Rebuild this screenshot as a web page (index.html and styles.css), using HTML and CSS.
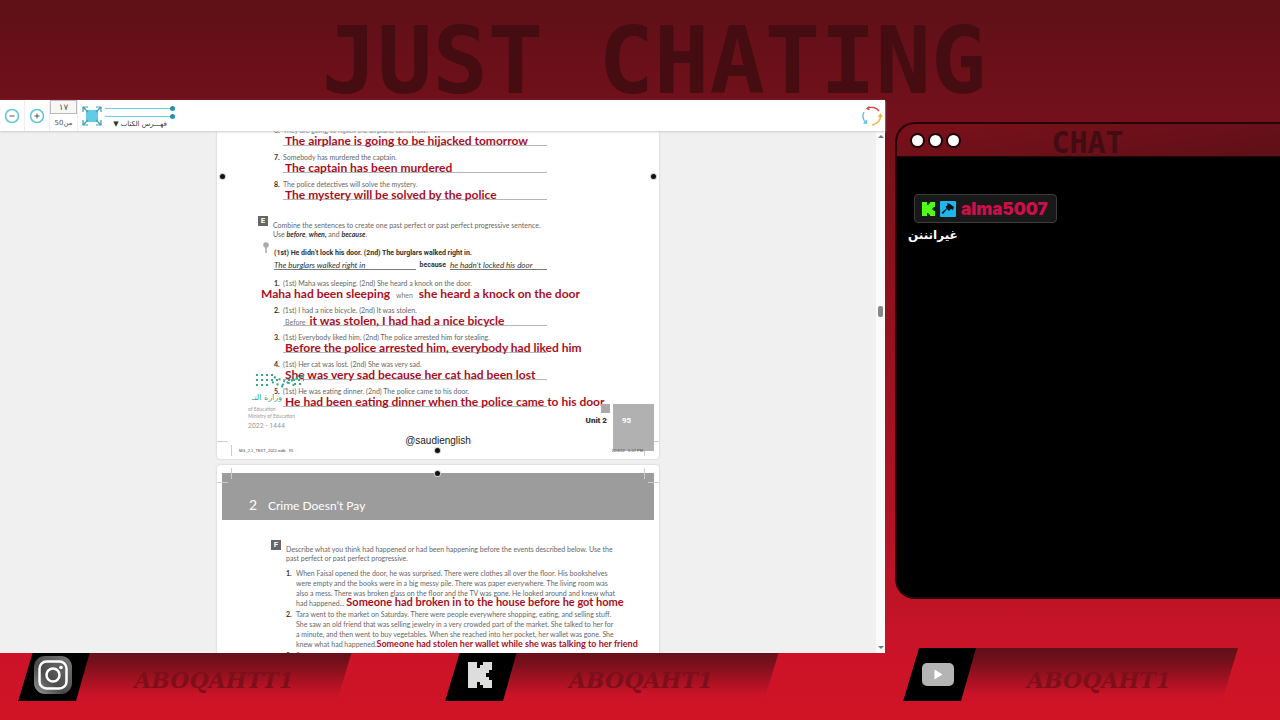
FILE: index.html
```html
<!DOCTYPE html>
<html lang="en">
<head>
    <meta charset="UTF-8">
    <meta name="viewport" content="width=device-width, initial-scale=1.0">
    <title>Just Chating</title>
    <link rel="stylesheet" href="styles.css">
</head>
<body>

    <header class="banner">
        <h1>JUST CHATING</h1>
    </header>

    <main class="stage">
        <section class="viewer">
            <div class="toolbar">
                <button class="tool" aria-label="Zoom out">
                    <svg width="16" height="16" viewBox="0 0 16 16" fill="none"><circle cx="8" cy="8" r="6.5" stroke="#67c5dc" stroke-width="1.6"/><path d="M5.5 8h5" stroke="#555"/></svg>
                </button>
                <button class="tool" aria-label="Zoom in">
                    <svg width="16" height="16" viewBox="0 0 16 16" fill="none"><circle cx="8" cy="8" r="6.5" stroke="#67c5dc" stroke-width="1.6"/><path d="M5.5 8h5M8 5.5v5" stroke="#555"/></svg>
                </button>
                <div class="pager">
                    <input type="text" value="١٧" aria-label="Page number">
                    <span dir="rtl">من50</span>
                </div>
                <button class="tool full" aria-label="Full screen">
                    <svg width="20" height="20" viewBox="0 0 20 20" fill="none"><rect x="4" y="4" width="12" height="12" fill="#63cbe8"/><path d="M1 6V1h5M14 1h5v5M19 14v5h-5M6 19H1v-5M1 1l5 5M19 1l-5 5M19 19l-5-5M1 19l5-5" stroke="#3f9db5" stroke-width="1.2"/></svg>
                </button>
                <div class="contents">
                    <input type="range" value="100" aria-label="Zoom level">
                    <input type="range" value="100" aria-label="Brightness">
                    <button dir="rtl">فهـــرس الكتاب ▼</button>
                </div>
                <button class="tool refresh" aria-label="Refresh">
                    <svg width="22" height="22" viewBox="0 0 22 22" fill="none" stroke-width="1.4"><path d="M18 6C15 2 10 1.500 6 3.500M8.500 1.500L6 3.500l2.500 1.500" stroke="#cf4a3c"/><path d="M19.500 10c.5 5-3 9-8.500 10M17.500 12l2-2.500 1.500 2.500" stroke="#e8b93c"/><path d="M3 7c-2 4-1 8 2.500 11M5.500 15v3H2.500" stroke="#62c4e0"/></svg>
                </button>
            </div>

            <div class="reader">
                <div class="pages">
                    <article class="page page-95">
                        <i class="mark mark-left"></i>
                        <i class="mark mark-right"></i>
                        <i class="mark mark-bottom"></i>

                        <ol class="exercise" start="6">
                            <li><b class="num">6.</b><p>They are going to hijack the airplane tomorrow.</p><p class="answer">The airplane is going to be hijacked tomorrow</p></li>
                            <li><b class="num">7.</b><p>Somebody has murdered the captain.</p><p class="answer">The captain has been murdered</p></li>
                            <li><b class="num">8.</b><p>The police detectives will solve the mystery.</p><p class="answer">The mystery will be solved by the police</p></li>
                        </ol>

                        <div class="task">
                            <b class="letter">E</b>
                            <p>Combine the sentences to create one past perfect or past perfect progressive sentence.<br>Use <b><i>before</i></b>, <b><i>when,</i></b> and <b><i>because</i></b>.</p>
                        </div>

                        <div class="sample">
                            <svg class="key" width="8" height="12" viewBox="0 0 8 12"><circle cx="4" cy="3" r="2.800" fill="#aaa"/><path d="M4 5v6" stroke="#aaa" stroke-width="1.500"/></svg>
                            <b>(1st) He didn’t lock his door. (2nd) The burglars walked right in.</b>
                            <div class="written">
                                <i class="first">The burglars walked right in</i>
                                <b>because</b>
                                <i class="second">he hadn’t locked his door</i>
                            </div>
                        </div>

                        <ol class="exercise">
                            <li><b class="num">1.</b><p>(1st) Maha was sleeping. (2nd) She heard a knock on the door.</p><p class="answer wide">Maha had been sleeping <small>when</small> she heard a knock on the door</p></li>
                            <li><b class="num">2.</b><p>(1st) I had a nice bicycle. (2nd) It was stolen.</p><p class="answer"><small>Before</small>it was stolen, I had had a nice bicycle</p></li>
                            <li><b class="num">3.</b><p>(1st) Everybody liked him. (2nd) The police arrested him for stealing.</p><p class="answer">Before the police arrested him, everybody had liked him</p></li>
                            <li><b class="num">4.</b><p>(1st) Her cat was lost. (2nd) She was very sad.</p><p class="answer">She was very sad because her cat had been lost</p></li>
                            <li><b class="num">5.</b><p>(1st) He was eating dinner. (2nd) The police came to his door.</p><p class="answer">He had been eating dinner when the police came to his door</p></li>
                        </ol>

                        <div class="ministry">
                            <svg width="52" height="18" viewBox="0 0 52 18"><path d="M2 3h20M2 8h24M2 13h12M20 5l22 9M18 10l14 6M28 13l20-9M34 8h16M38 4h12M40 12h10" stroke="#35a987" stroke-width="2" stroke-dasharray="2 3" fill="none"/></svg>
                            <strong dir="rtl">وزارة التـ</strong>
                            <span>of Education</span>
                            <span>Ministry of Education</span>
                            <em>2022 - 1444</em>
                        </div>

                        <div class="folio"><b>Unit 2</b><span>95</span></div>
                        <p class="handle">@saudienglish</p>
                        <div class="slug"><span>MG_2.1_TEXT_2022.indb &nbsp; 95</span><span>12/4/22 &nbsp; 5:57 PM</span></div>
                    </article>

                    <article class="page page-96">
                        <i class="mark mark-top"></i>
                        <h2><span>2</span>Crime Doesn’t Pay</h2>
                        <div class="task">
                            <b class="letter">F</b>
                            <p>Describe what you think had happened or had been happening before the events described below. Use the<br>past perfect or past perfect progressive.</p>
                        </div>
                        <ol class="stories">
                            <li><b class="num">1.</b><p>When Faisal opened the door, he was surprised. There were clothes all over the floor. His bookshelves<br>were empty and the books were in a big messy pile. There was paper everywhere. The living room was<br>also a mess. There was broken glass on the floor and the TV was gone. He looked around and knew what<br>had happened... <strong>Someone had broken in to the house before he got home</strong></p></li>
                            <li><b class="num">2.</b><p>Tara went to the market on Saturday. There were people everywhere shopping, eating, and selling stuff.<br>She saw an old friend that was selling jewelry in a very crowded part of the market. She talked to her for<br>a minute, and then went to buy vegetables. When she reached into her pocket, her wallet was gone. She<br>knew what had happened.<strong class="small">Someone had stolen her wallet while she was talking to her friend</strong></p></li>
                            <li><b class="num">3.</b><p>Someone</p></li>
                        </ol>
                    </article>
                </div>

                <div class="scrollbar">
                    <i class="arrow up"></i>
                    <i class="thumb"></i>
                    <i class="arrow down"></i>
                </div>
            </div>
        </section>

        <aside class="chat">
            <div class="chat-head">
                <i class="dot"></i><i class="dot"></i><i class="dot"></i>
                <h2>CHAT</h2>
            </div>
            <div class="chat-body">
                <div class="user">
                    <svg width="13" height="14" viewBox="0 0 13 14"><path d="M0 0h5v3h1.500V1.500H8V0h5v5h-1.500v1.500H10v1h1.500V9H13v5H8v-1.500H6.500V11H5v3H0z" fill="#53fc18"/></svg>
                    <svg width="16" height="16" viewBox="0 0 16 16"><rect width="16" height="16" rx="1" fill="#1fb6ee"/><path d="M7 2l3 1 4 3-1 3-2-1-2 2-2-2-4 5-1.500-1.500 5-4-1-2 2-1z" fill="#06151c"/></svg>
                    <b>alma5007</b>
                </div>
                <p dir="rtl">غيرانننن</p>
            </div>
        </aside>
    </main>

    <footer class="socials">
        <a class="social" href="#">
            <span class="logo">
                <svg width="38" height="38" viewBox="0 0 38 38" fill="none"><defs><linearGradient id="ig" x1="0" y1="1" x2="1" y2="0"><stop offset="0" stop-color="#999"/><stop offset=".4" stop-color="#4a4a4a"/><stop offset="1" stop-color="#777"/></linearGradient></defs><rect width="38" height="38" rx="11" fill="url(#ig)"/><rect x="5.500" y="5.500" width="27" height="27" rx="7" stroke="#fff" stroke-width="2.500"/><circle cx="19" cy="19" r="6.500" stroke="#fff" stroke-width="2.500"/><circle cx="27" cy="11.500" r="1.800" fill="#fff"/></svg>
            </span>
            <b>ABOQAHTT1</b>
        </a>
        <a class="social" href="#">
            <span class="logo">
                <svg width="24" height="26" viewBox="0 0 24 26"><path d="M0 0h9v6h3V3h3V0h9v8h-3v3h-3v4h3v3h3v8h-9v-3h-3v-3H9v6H0z" fill="#ddd"/></svg>
            </span>
            <b>ABOQAHT1</b>
        </a>
        <a class="social" href="#">
            <span class="logo">
                <svg width="32" height="23" viewBox="0 0 32 23"><rect width="32" height="23" rx="5" fill="#b4b4b4"/><path d="M12.500 6.500v10l8-5z" fill="#fff"/></svg>
            </span>
            <b>ABOQAHT1</b>
        </a>
    </footer>

</body>
</html>
```
FILE: styles.css
```css
* {
    box-sizing: border-box;
}
body {
    margin: 0;
    min-height: 100vh;
    display: flex;
    flex-direction: column;
    overflow: hidden;
    font-family: Lato, sans-serif;
    background: linear-gradient(#5f1018 0%, #74101b 17%, #be1426 83%, #cb1328 90%, #d01426 100%);
}
h1, h2, p, ol {
    margin: 0;
    padding: 0;
}
ol {
    list-style: none;
}
button {
    border: none;
    background: none;
    padding: 0;
    cursor: pointer;
}
.banner {
    height: 100px;
    padding-left: 28px;
    text-align: center;
}
.banner h1 {
    font: bold 92px/124px "DejaVu Sans Mono", monospace;
    color: #450c12;
    white-space: nowrap;
}
.stage {
    display: flex;
    flex: 1;
    min-height: 0;
}

/* book viewer */
.viewer {
    flex: 885;
    min-width: 0;
    display: flex;
    flex-direction: column;
    background: #fff;
    position: relative;
    z-index: 1;
}
.toolbar {
    height: 31px;
    display: flex;
    align-items: stretch;
    box-shadow: 0 1px 2px #ccc;
    position: relative;
    z-index: 1;
}
.tool {
    width: 25px;
    display: flex;
    align-items: center;
    justify-content: center;
    border-right: 1px solid #eee;
}
.pager {
    width: 28px;
    text-align: center;
    border-right: 1px solid #eee;
    font: 7px/18px "DejaVu Sans", sans-serif;
    color: #555;
}
.pager input {
    display: block;
    width: 100%;
    height: 14px;
    padding: 0;
    border: 1px solid #bbb;
    background: #f6f6f6;
    text-align: center;
    font: 9px "DejaVu Sans", sans-serif;
    color: #555;
}
.pager span {
    display: block;
}
.full, .refresh {
    width: 27px;
    border: none;
}
.contents {
    width: 70px;
    padding-top: 4px;
    display: flex;
    flex-direction: column;
}
.contents input {
    appearance: none;
    width: 100%;
    height: 8px;
    margin: 0;
    background: linear-gradient(#6fcbe2, #6fcbe2) center / 100% 1px no-repeat;
}
.contents input::-webkit-slider-thumb {
    appearance: none;
    width: 5px;
    height: 5px;
    border-radius: 50%;
    background: #2b8fae;
}
.contents button {
    font: 7px/9px "DejaVu Sans", sans-serif;
    color: #333;
    white-space: nowrap;
}
.refresh {
    margin-left: auto;
}
.reader {
    flex: 1;
    min-height: 0;
    display: flex;
    background: #f0f0f0;
}
.pages {
    flex: 1;
    height: 522px;
    overflow: hidden;
    display: flex;
    flex-direction: column;
    align-items: center;
    gap: 6px;
}
.page {
    flex: none;
    width: 100%;
    max-width: 442px;
    background: #fff;
    border-radius: 3px;
    box-shadow: 0 0 2px #bbb;
    position: relative;
    font-size: 7px;
    line-height: 11px;
    color: #666;
}
.page-95 {
    height: 334px;
    margin-top: -6px;
}
.page-96 {
    padding: 8px 5px;
    line-height: 10px;
}
/* crop marks in the page corners */
.page::before {
    content: "";
    position: absolute;
    left: 0;
    right: 0;
    bottom: 3px;
    height: 15px;
    background:
        linear-gradient(#ccc, #ccc) 0 0 / 11px 1px no-repeat,
        linear-gradient(#ccc, #ccc) 100% 0 / 11px 1px no-repeat,
        linear-gradient(#ccc, #ccc) 14px 100% / 1px 11px no-repeat,
        linear-gradient(#ccc, #ccc) calc(100% - 14px) 100% / 1px 11px no-repeat;
}
.page-96::before {
    top: 3px;
    transform: scaleY(-1);
}
.num, .exercise b {
    color: #333;
}
.exercise {
    padding-left: 57px;
}
.exercise li {
    display: grid;
    grid-template-columns: 9px 264px;
    height: 27px;
    align-content: start;
    white-space: nowrap;
}
.answer {
    grid-column: 2;
    height: 10px;
    padding-left: 2px;
    border-bottom: 1px solid #b5b5b5;
    font: bold 12px/9px Lato, sans-serif;
    color: #a90f24;
}
.answer small {
    padding-right: 4px;
    font: 7px/7px Lato, sans-serif;
    color: #777;
}
.answer.wide {
    grid-column: 1 / 3;
    margin-left: -15px;
    border: none;
}
.answer.wide small {
    padding: 0 3px;
}
.task {
    display: flex;
    gap: 5px;
    line-height: 9px;
    white-space: nowrap;
}
.page-95 .task {
    margin: 10px 0 9px 41px;
}
.task i {
    color: #333;
}
.letter {
    flex: none;
    width: 10px;
    height: 10px;
    background: #666;
    color: #fff;
    text-align: center;
    font: bold 8px/10px Roboto, sans-serif;
}
.task p {
    padding-top: 5px;
}
.sample {
    position: relative;
    margin-left: 57px;
    height: 30px;
    color: #333;
    white-space: nowrap;
    font-family: Roboto, sans-serif;
}
.key {
    position: absolute;
    left: -12px;
    top: -6px;
}
.written {
    display: flex;
    gap: 4px;
    width: 273px;
    line-height: 12px;
}
.written i {
    font: italic 8px/12px Lato, sans-serif;
    height: 11px;
    border-bottom: 1px solid #777;
}
.first {
    flex: 143;
}
.second {
    flex: 98;
}
.ministry {
    position: absolute;
    left: 31px;
    top: 247px;
    width: 56px;
    display: flex;
    flex-direction: column;
    font-size: 5px;
    line-height: 7px;
    color: #999;
    white-space: nowrap;
}
.ministry svg {
    margin-left: 6px;
}
.ministry strong {
    width: 34px;
    font: 8px/16px "DejaVu Sans", sans-serif;
    color: #35a987;
}
.ministry em {
    font: 7px/12px Roboto, sans-serif;
}
.folio {
    display: flex;
    justify-content: flex-end;
    gap: 6px;
    margin-right: 5px;
    position: absolute;
    right: 0;
    bottom: 8px;
    font: bold 8px/34px Roboto, sans-serif;
    color: #333;
}
.folio::before {
    content: "";
    position: absolute;
    right: 44px;
    top: 0;
    width: 9px;
    height: 9px;
    background: #aaa;
}
.folio span {
    width: 41px;
    height: 47px;
    padding-left: 9px;
    background: #b1b1b1;
    color: #fff;
}
.handle {
    position: absolute;
    left: 0;
    right: 0;
    bottom: 10px;
    text-align: center;
    font: 10px/16px "Liberation Sans", sans-serif;
    color: #222;
}
.slug {
    position: absolute;
    left: 15px;
    right: 5px;
    bottom: 3px;
    height: 11px;
    padding: 0 11px 0 7px;
    display: flex;
    justify-content: space-between;
    font: 4px/12px "Liberation Sans", sans-serif;
    color: #444;
}
.mark {
    position: absolute;
    width: 5px;
    height: 5px;
    border-radius: 50%;
    background: #111;
    box-shadow: 0 0 0 1px #ccc;
}
.mark-left {
    left: 3px;
    top: 49px;
}
.mark-right {
    right: 3px;
    top: 49px;
}
.mark-bottom {
    left: calc(50% - 3px);
    bottom: 6px;
}
.mark-top {
    left: calc(50% - 3px);
    top: 6px;
}
.page h2 {
    height: 47px;
    padding: 0 27px;
    background: #9c9c9c;
    color: #fff;
    font: 12px/64px Lato, sans-serif;
}
.page h2 span {
    display: inline-block;
    width: 19px;
    font-size: 14px;
}
.page-96 .task {
    margin: 20px 0 0 49px;
}
.stories {
    padding: 5px 0 0 64px;
}
.stories li {
    display: grid;
    grid-template-columns: 10px 1fr;
    white-space: nowrap;
    margin-bottom: 1px;
}
.stories strong {
    font: bold 11px/1px Lato, sans-serif;
    color: #a90f24;
}
.stories .small {
    font-size: 9px;
}
.scrollbar {
    width: 9px;
    padding: 4px 0;
    background: #fafafa;
    display: grid;
    grid-template-rows: 170fr auto 330fr;
    justify-items: center;
}
.thumb {
    width: 5px;
    height: 11px;
    border-radius: 2px;
    background: #888;
}
.arrow {
    width: 0;
    height: 3px;
    border: 3px solid transparent;
}
.up {
    border-top: none;
    border-bottom-color: #777;
}
.down {
    align-self: end;
    border-bottom: none;
    border-top-color: #777;
}

/* chat window */
.chat {
    flex: 383;
    min-width: 0;
    margin: 22px 0 54px 10px;
    border: 2px solid #24060a;
    border-right: none;
    border-radius: 20px 0 0 20px;
    overflow: hidden;
    background: #000;
}
.chat-head {
    height: 33px;
    padding-left: 13px;
    display: flex;
    align-items: center;
    gap: 3px;
    background: linear-gradient(170deg, #7b101a, #5f1018);
    border-bottom: 1px solid #24060a;
}
.dot {
    width: 15px;
    height: 15px;
    border: 2px solid #1c0508;
    border-radius: 50%;
    background: #fff;
}
.chat-head h2 {
    flex: 1;
    padding: 6px 69px 0 0;
    text-align: center;
    font: bold 30px/28px "DejaVu Sans Mono", monospace;
    color: #420c12;
}
.chat-body {
    padding: 37px 11px;
}
.user {
    display: inline-flex;
    align-items: center;
    gap: 5px;
    height: 29px;
    margin-left: 6px;
    padding: 0 8px 0 7px;
    border: 1px solid #3c3c3c;
    border-radius: 4px;
    background: #191919;
    font: bold 17px Inter, sans-serif;
    color: #cc0f4b;
}
.chat-body p {
    width: fit-content;
    font: bold 12px/24px "DejaVu Sans", sans-serif;
    color: #fff;
}

/* social bar */
.socials {
    height: 72px;
    margin-top: -5px;
    padding-left: 18px;
    display: grid;
    grid-template-columns: 427fr 458fr 377fr;
    align-items: start;
}
.social {
    width: 335px;
    height: 53px;
    display: flex;
    clip-path: polygon(16px 0, 100% 0, calc(100% - 16px) 100%, 0 100%);
    background: linear-gradient(#5f1018, #74101b 25%, #cd1328 90%);
    color: #7d0f1b;
    text-decoration: none;
}
.logo {
    width: 73px;
    display: flex;
    align-items: center;
    justify-content: center;
    padding-right: 3px;
    background: #000;
    clip-path: polygon(16px 0, 100% 0, calc(100% - 15px) 100%, 0 100%);
}
.social b {
    flex: 1;
    padding-right: 16px;
    text-align: center;
    font: italic bold 22px/64px "DejaVu Serif", serif;
}
```
